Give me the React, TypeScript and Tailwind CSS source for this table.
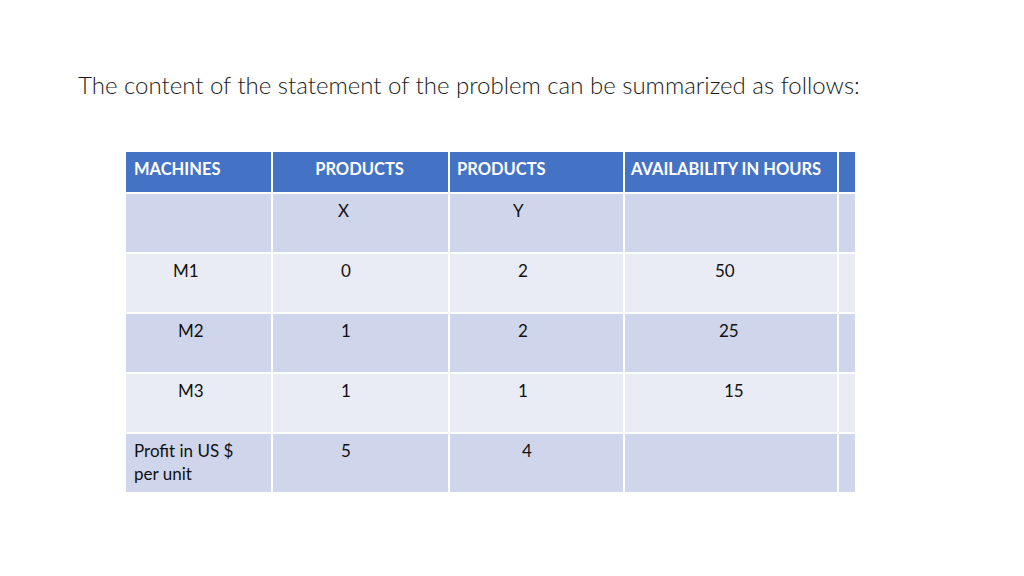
const rows = [
  { cells: ["", "X", "Y", ""], pads: ["", "pl-[65px]", "pl-[63px]", ""] },
  { cells: ["M1", "0", "2", "50"], pads: ["pl-[47px]", "pl-[68px]", "pl-[68px]", "pl-[90px]"] },
  { cells: ["M2", "1", "2", "25"], pads: ["pl-[52px]", "pl-[68px]", "pl-[68px]", "pl-[94px]"] },
  { cells: ["M3", "1", "1", "15"], pads: ["pl-[52px]", "pl-[68px]", "pl-[68px]", "pl-[99px]"] },
  { cells: ["Profit in US $\nper unit", "5", "4", ""], pads: ["pl-[8px]", "pl-[68px]", "pl-[72px]", ""] },
];

const cols = "grid grid-cols-[145px_175px_173px_212px_16px] gap-x-[2px]";
const head = "bg-[#4472c4] text-white font-bold text-[16.5px] pt-[5px]";

export default function App() {
  return (
    <div className="w-[1024px] h-[576px] bg-white overflow-hidden" style={{ fontFamily: "Lato, 'Open Sans', sans-serif" }}>
      <div className="pt-[71px] pl-[78px] text-[24px] font-light text-[#1a1a1a] leading-[28px]">
        The content of the statement of the problem can be summarized as follows:
      </div>

      <div className="mt-[53px] ml-[126px] w-[729px]">
        <div className={`${cols} h-[40px]`}>
          <div className={`${head} pl-[8px]`}>MACHINES</div>
          <div className={`${head} text-center pr-[2px]`}>PRODUCTS</div>
          <div className={`${head} pl-[7px]`}>PRODUCTS</div>
          <div className={`${head} pl-[6px]`}>AVAILABILITY IN HOURS</div>
          <div className="bg-[#4472c4]" />
        </div>
        <div className={`${cols} bg-white gap-y-[2px] pt-[2px]`}>
          {rows.map((r, i) => {
            const bg = i % 2 === 0 ? "bg-[#cfd5ea]" : "bg-[#e9ebf5]";
            return [
              ...r.cells.map((c, j) => (
                <div
                  key={`${i}-${j}`}
                  className={`${bg} h-[58px] text-[17px] leading-[23px] text-[#111] pt-[5px] whitespace-pre-line ${r.pads[j]}`}
                >
                  {c}
                </div>
              )),
              <div key={`${i}-e`} className={`${bg} h-[58px]`} />,
            ];
          })}
        </div>
      </div>
    </div>
  );
}
